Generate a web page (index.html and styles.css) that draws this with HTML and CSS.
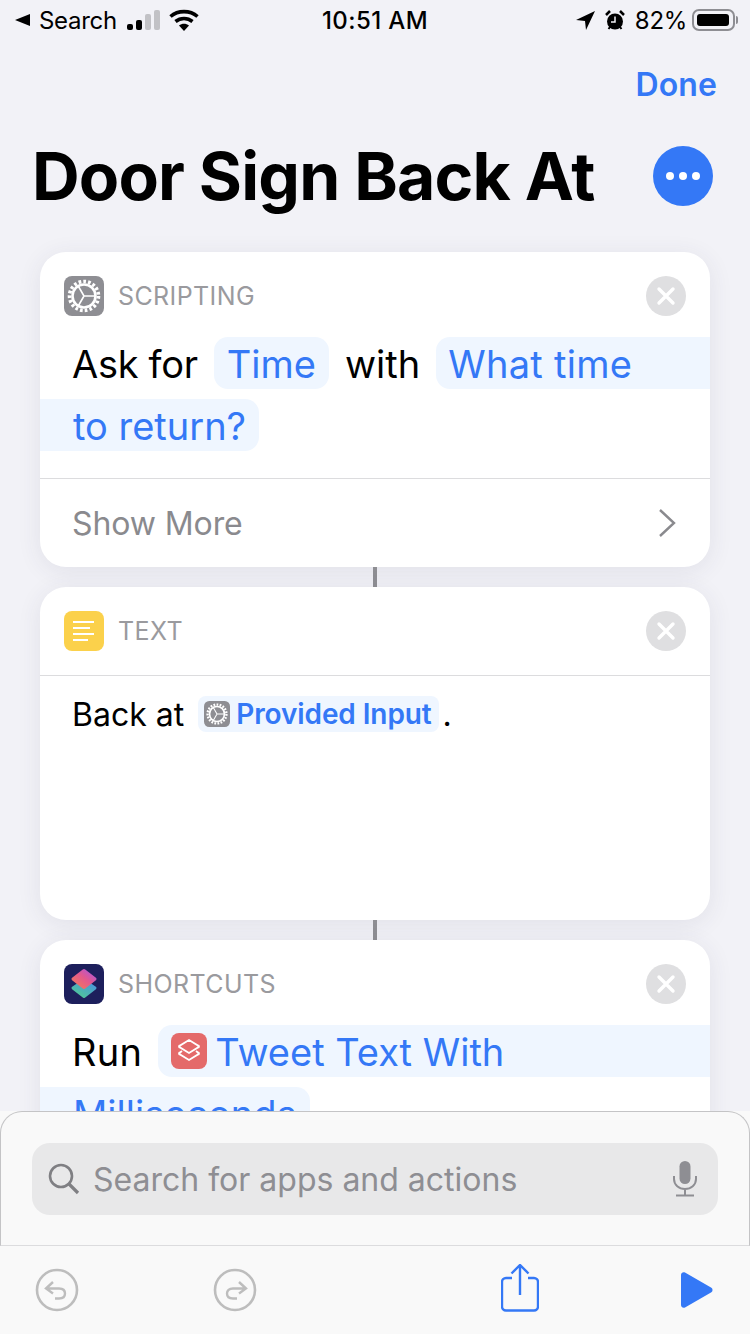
FILE: index.html
```html
<!DOCTYPE html>
<html lang="en">

    <head>
        <meta charset="UTF-8">
        <meta name="viewport" content="width=device-width, initial-scale=1.0">
        <title>Door Sign Back At</title>
        <link rel="stylesheet" href="styles.css">
    </head>

    <body>
        <svg class="defs" width="0" height="0">
            <defs>
                <symbol id="gear" viewBox="0 0 40 40">
                    <rect width="40" height="40" rx="8" fill="#8e8e93"/>
                    <circle cx="20" cy="20" r="14.500" fill="none" stroke="#fff" stroke-width="3.600" stroke-dasharray="2.700 2.100"/>
                    <circle cx="20" cy="20" r="11.500" fill="none" stroke="#fff" stroke-width="2.600"/>
                    <path d="M20 20h11M20 20l-5.500-9.500M20 20l-5.500 9.500" fill="none" stroke="#fff" stroke-width="1.600"/>
                </symbol>
                <linearGradient id="topGrad" x1="1" y1="0" x2="0" y2="1">
                    <stop offset="0" stop-color="#a956e0"/>
                    <stop offset=".45" stop-color="#e2588f"/>
                    <stop offset="1" stop-color="#f47c55"/>
                </linearGradient>
                <linearGradient id="lowGrad" x1="1" y1="0" x2="0.2" y2="1">
                    <stop offset="0" stop-color="#4a8fe8"/>
                    <stop offset="1" stop-color="#4fc796"/>
                </linearGradient>
            </defs>
        </svg>

        <div class="statusbar">
            <div class="status-left">
                <svg class="back-tri" width="15" height="12" viewBox="0 0 15 12"><path d="M0 6L15 0v12z" fill="#000"/></svg>
                <span>Search</span>
                <div class="signal">
                    <i class="bar bar1"></i>
                    <i class="bar bar2"></i>
                    <i class="bar bar3"></i>
                    <i class="bar bar4"></i>
                </div>
                <svg class="wifi" width="30" height="22" viewBox="0 0 30 22">
                    <path d="M1.500 7.500C9 1 21 1 28.500 7.500" fill="none" stroke="#000" stroke-width="3.600"/>
                    <path d="M6.500 12.500c5-4 12-4 17 0" fill="none" stroke="#000" stroke-width="3.600"/>
                    <path d="M10 16.500c3-2.400 7-2.400 10 0l-5 5.500z" fill="#000"/>
                </svg>
            </div>
            <div class="status-time">10:51 AM</div>
            <div class="status-right">
                <svg width="19" height="19" viewBox="0 0 19 19"><path d="M19 0L0 9l9 1 1 9z" fill="#000"/></svg>
                <svg class="alarm" width="20" height="21" viewBox="0 0 20 21">
                    <circle cx="10" cy="11.500" r="8" fill="#000"/>
                    <path d="M1 5l4-4M19 5l-4-4" stroke="#000" stroke-width="2.500" fill="none"/>
                    <path d="M3.500 19l1.500-2M16.500 19L15 17" stroke="#000" stroke-width="2" fill="none"/>
                    <path d="M10 6.500v5.500H6" stroke="#f2f2f7" stroke-width="1.500" fill="none"/>
                </svg>
                <span class="percent">82%</span>
                <div class="battery"><div class="battery-fill"></div></div>
                <div class="battery-nub"></div>
            </div>
        </div>

        <div class="nav">
            <span class="done">Done</span>
        </div>

        <div class="title-row">
            <h1>Door Sign Back At</h1>
            <div class="more"><i></i><i></i><i></i></div>
        </div>

        <div class="card">
            <div class="card-head">
                <svg class="app-icon"><use href="#gear"/></svg>
                <span class="app-name">SCRIPTING</span>
                <div class="close"><svg width="20" height="20" viewBox="0 0 20 20"><path d="M3 3l14 14M17 3L3 17" stroke="#fff" stroke-width="3.400" stroke-linecap="round"/></svg></div>
            </div>
            <div class="ask">
                <div class="line">
                    <span class="ask-for">Ask for</span>
                    <span class="token">Time</span>
                    <span>with</span>
                    <span class="token to-edge">What time</span>
                </div>
                <div class="line">
                    <span class="token from-edge">to return?</span>
                </div>
            </div>
            <div class="show-more">
                <span>Show More</span>
                <svg width="18" height="30" viewBox="0 0 18 30"><path d="M1 2l14 13L1 28" fill="none" stroke="#8a8a8e" stroke-width="2.400"/></svg>
            </div>
        </div>

        <div class="connector"></div>

        <div class="card">
            <div class="card-head head-line">
                <svg class="app-icon" viewBox="0 0 40 40">
                    <rect width="40" height="40" rx="8" fill="#fbd14b"/>
                    <path d="M9 11h21M9 17h17M9 23h21M9 29h15" stroke="#fff" stroke-width="2" fill="none"/>
                </svg>
                <span class="app-name">TEXT</span>
                <div class="close"><svg width="20" height="20" viewBox="0 0 20 20"><path d="M3 3l14 14M17 3L3 17" stroke="#fff" stroke-width="3.400" stroke-linecap="round"/></svg></div>
            </div>
            <div class="text-body">
                <span>Back at</span>
                <span class="var-token"><svg class="var-icon"><use href="#gear"/></svg>Provided Input</span>
                <span class="dot">.</span>
            </div>
        </div>

        <div class="connector"></div>

        <div class="card">
            <div class="card-head">
                <svg class="app-icon" viewBox="0 0 40 40">
                    <rect width="40" height="40" rx="8" fill="#1d1f5c"/>
                    <path d="M20 16.500L31 24 20 32.500 9 24z" fill="url(#lowGrad)" stroke="url(#lowGrad)" stroke-width="3" stroke-linejoin="round"/>
                    <path d="M20 6.500L31 15 20 23.500 9 15z" fill="url(#topGrad)" stroke="url(#topGrad)" stroke-width="3" stroke-linejoin="round"/>
                </svg>
                <span class="app-name">SHORTCUTS</span>
                <div class="close"><svg width="20" height="20" viewBox="0 0 20 20"><path d="M3 3l14 14M17 3L3 17" stroke="#fff" stroke-width="3.400" stroke-linecap="round"/></svg></div>
            </div>
            <div class="ask">
                <div class="line">
                    <span class="run">Run</span>
                    <span class="token to-edge run-token">
                        <svg class="run-icon" viewBox="0 0 36 36">
                            <rect width="36" height="36" rx="8" fill="#e46a6a"/>
                            <path d="M18 7l9 5.500a1 1 0 0 1 0 2L18 20l-9-5.500a1 1 0 0 1 0-2z" fill="none" stroke="#fff" stroke-width="1.800"/>
                            <path d="M11 18l-2 1.500a1 1 0 0 0 0 2l9 5.500 9-5.500a1 1 0 0 0 0-2L25 18" fill="none" stroke="#fff" stroke-width="1.800"/>
                        </svg>
                        Tweet Text With
                    </span>
                </div>
                <div class="line">
                    <span class="token from-edge">Milliseconds</span>
                </div>
            </div>
        </div>

        <div class="sheet">
            <div class="search-area">
                <div class="searchbox">
                    <svg width="32" height="32" viewBox="0 0 32 32">
                        <circle cx="13" cy="13" r="11" fill="none" stroke="#7f7f83" stroke-width="2.600"/>
                        <path d="M21 21l9 9" stroke="#7f7f83" stroke-width="3.200"/>
                    </svg>
                    <span class="placeholder">Search for apps and actions</span>
                    <svg class="mic" width="24" height="36" viewBox="0 0 24 36">
                        <rect x="6.500" y="0" width="11" height="23" rx="5.500" fill="#8e8e93"/>
                        <path d="M1 15v3c0 6 5 10 11 10s11-4 11-10v-3M12 28v6M3 34.500h18" fill="none" stroke="#8e8e93" stroke-width="2"/>
                    </svg>
                </div>
            </div>
            <div class="toolbar">
                <svg width="44" height="44" viewBox="0 0 44 44">
                    <circle cx="22" cy="22" r="20" fill="none" stroke="#bdbdbd" stroke-width="2.600"/>
                    <path d="M18 14l-7 6.500 7 5M11 20.500h13c4 0 6 2 6 5s-2 5-6 5h-4" fill="none" stroke="#bdbdbd" stroke-width="2.400"/>
                </svg>
                <svg class="redo" width="44" height="44" viewBox="0 0 44 44">
                    <circle cx="22" cy="22" r="20" fill="none" stroke="#bdbdbd" stroke-width="2.600"/>
                    <path d="M26 14l7 6.500-7 5M33 20.500H20c-4 0-6 2-6 5s2 5 6 5h4" fill="none" stroke="#bdbdbd" stroke-width="2.400"/>
                </svg>
                <svg class="share" width="38" height="48" viewBox="0 0 38 48">
                    <path d="M11 14H5a4 4 0 0 0-4 4v24.500a4 4 0 0 0 4 4h28a4 4 0 0 0 4-4V18a4 4 0 0 0-4-4h-6" fill="none" stroke="#3478f6" stroke-width="2.400"/>
                    <path d="M19 1v30M10.500 9.500L19 1l8.500 8.500" fill="none" stroke="#3478f6" stroke-width="2.400"/>
                </svg>
                <svg class="play" width="32" height="36" viewBox="0 0 32 36">
                    <path d="M0 3c0-2 2-3.500 4-2.500l26 15c2 1 2 4 0 5l-26 15C2 36.500 0 35 0 33z" fill="#3478f6"/>
                </svg>
            </div>
        </div>
    </body>

</html>
```

FILE: styles.css
```css
* {
    margin: 0;
    padding: 0;
    box-sizing: border-box;
}

html,
body {
    width: 750px;
    height: 1334px;
    overflow: hidden;
}

body {
    position: relative;
    background: #f2f2f7;
    color: #000;
    font-family: Inter, "Liberation Sans", sans-serif;
}

.defs {
    display: block;
    height: 0;
}

.statusbar {
    display: flex;
    align-items: center;
    justify-content: space-between;
    height: 40px;
    padding: 0 12px 0 15px;
    font-size: 24px;
    letter-spacing: -0.3px;
}

.status-left,
.status-right {
    display: flex;
    align-items: center;
    width: 240px;
}

.status-right {
    justify-content: flex-end;
}

.back-tri {
    margin-right: 9px;
}

.signal {
    display: flex;
    align-items: flex-end;
    gap: 3px;
    height: 20px;
    margin-left: 10px;
}

.bar {
    display: block;
    width: 6px;
    border-radius: 2px;
    background: #000;
}

.bar1 { height: 6px; }
.bar2 { height: 10px; }
.bar3 { height: 16px; background: #c2c2c6; }
.bar4 { height: 20px; background: #c2c2c6; }

.wifi {
    margin-left: 9px;
}

.status-time {
    margin-right: 3px;
    font-weight: 500;
    letter-spacing: .4px;
}

.alarm {
    margin-left: 10px;
}

.percent {
    margin-left: 10px;
}

.battery {
    width: 43px;
    height: 22px;
    margin-left: 5px;
    padding: 3px;
    border: 2px solid #8e8e93;
    border-radius: 7px;
}

.battery-fill {
    width: 32px;
    height: 12px;
    border-radius: 3px;
    background: #000;
}

.battery-nub {
    width: 2px;
    height: 8px;
    margin-left: 1px;
    border-radius: 0 2px 2px 0;
    background: #8e8e93;
}

.nav {
    display: flex;
    justify-content: flex-end;
    height: 98px;
    padding: 26px 33px 0 0;
}

.done {
    color: #3478f6;
    font-size: 32px;
    font-weight: 600;
    line-height: 38px;
    letter-spacing: .1px;
}

.title-row {
    display: flex;
    align-items: center;
    justify-content: space-between;
    height: 76px;
    margin-bottom: 38px;
    padding: 0 37px 0 32px;
}

h1 {
    font-size: 66px;
    font-weight: 700;
    letter-spacing: -0.85px;
    line-height: 76px;
}

.more {
    display: flex;
    align-items: center;
    justify-content: center;
    gap: 5px;
    width: 60px;
    height: 60px;
    border-radius: 50%;
    background: #3478f6;
}

.more i {
    display: block;
    width: 8px;
    height: 8px;
    border-radius: 50%;
    background: #fff;
}

.card {
    width: 670px;
    margin: 0 40px;
    border-radius: 26px;
    background: #fff;
    box-shadow: 0 4px 24px rgba(60, 60, 90, .09);
}

.connector {
    width: 4px;
    height: 20px;
    margin: 0 auto;
    background: #8e8e93;
}

.card-head {
    display: flex;
    align-items: center;
    padding: 24px 24px 21px;
}

.head-line {
    border-bottom: 1px solid #dcdcde;
    padding-bottom: 24px;
}

.app-icon {
    flex: none;
    width: 40px;
    height: 40px;
}

.app-name {
    flex: 1;
    margin-left: 14px;
    color: #9a9a9e;
    font-size: 25px;
    letter-spacing: .4px;
}

.close {
    display: flex;
    align-items: center;
    justify-content: center;
    width: 40px;
    height: 40px;
    border-radius: 50%;
    background: #dfdfe1;
}

.ask {
    display: flex;
    flex-direction: column;
    gap: 10px;
    padding-bottom: 27px;
    font-size: 38px;
}

.line {
    display: flex;
    align-items: center;
    gap: 16px;
    height: 52px;
    padding-left: 32px;
}

.line > span {
    padding-top: 2px;
}

.ask-for {
    letter-spacing: -0.3px;
}

.run {
    letter-spacing: .3px;
}

.token {
    display: flex;
    align-items: center;
    height: 52px;
    padding: 0 13px;
    border-radius: 14px;
    background: #eff6ff;
    color: #3478f6;
    white-space: nowrap;
}

.to-edge {
    flex: 1;
    padding-left: 12px;
    border-radius: 14px 0 0 14px;
    letter-spacing: .3px;
}

.from-edge {
    margin-left: -32px;
    padding-left: 33px;
    border-radius: 0 14px 14px 0;
}

.run-token {
    gap: 8px;
    padding-left: 13px;
    letter-spacing: 0;
}

.run-icon {
    flex: none;
    width: 36px;
    height: 36px;
    margin-top: -2px;
}

.show-more {
    display: flex;
    align-items: center;
    justify-content: space-between;
    height: 89px;
    padding: 0 33px 0 32px;
    border-top: 1px solid #dcdcde;
    color: #8a8a8e;
    font-size: 32px;
    letter-spacing: -0.1px;
}

.text-body {
    display: flex;
    align-items: flex-start;
    height: 244px;
    padding: 20px 32px 0;
    font-size: 32px;
    line-height: 38px;
}

.var-token {
    display: flex;
    align-items: center;
    gap: 6px;
    height: 36px;
    margin-left: 14px;
    padding: 0 7px 0 6px;
    border-radius: 8px;
    background: #eff6ff;
    color: #3478f6;
    font-size: 28px;
    font-weight: 600;
    letter-spacing: -0.1px;
}

.var-icon {
    flex: none;
    width: 26px;
    height: 26px;
}

.dot {
    margin-left: 4px;
}

/* sits over the action list */
.sheet {
    position: absolute;
    right: 0;
    bottom: 0;
    left: 0;
    height: 223px;
    background: #f9f9f9;
}

.search-area {
    height: 135px;
    padding: 31px 31px 0;
    border: 1px solid #c4c4c6;
    border-bottom-color: #dcdcde;
    border-radius: 22px 22px 0 0;
}

.searchbox {
    display: flex;
    align-items: center;
    height: 72px;
    padding: 0 21px 0 16px;
    border-radius: 18px;
    background: #e8e8e9;
    color: #8e8e93;
    font-size: 32px;
}

.placeholder {
    flex: 1;
    margin-left: 13px;
}

.toolbar {
    display: flex;
    align-items: center;
    height: 88px;
    padding: 0 37px 0 35px;
}

.redo {
    margin-left: 134px;
}

.share {
    margin: 0 0 4px 244px;
}

.play {
    margin-left: auto;
}
```
